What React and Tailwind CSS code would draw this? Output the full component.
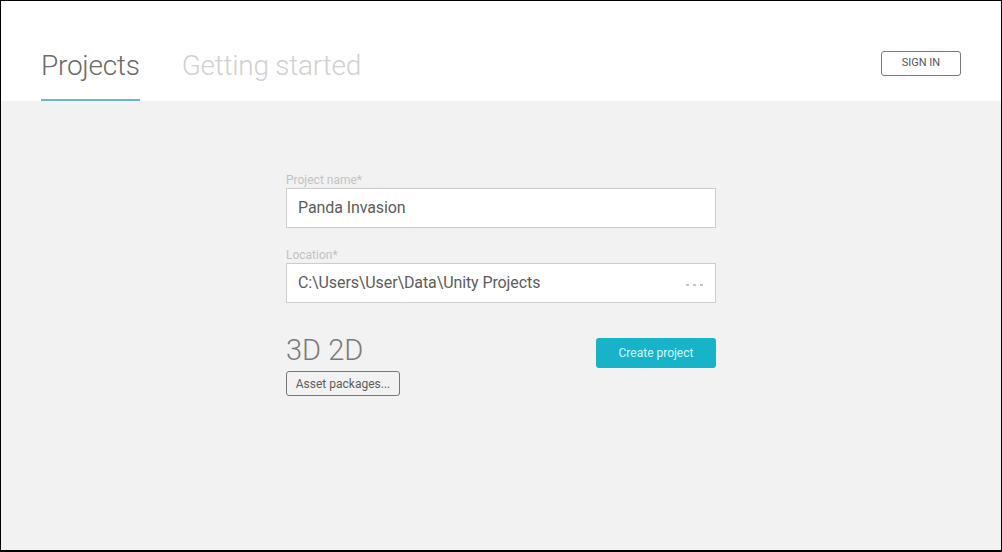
export default function App() {
  return (
    <div
      className="w-[1002px] h-[552px] border-l border-t border-r border-b-2 border-black bg-[#f2f2f2] flex flex-col overflow-hidden"
      style={{ fontFamily: "Roboto, 'Noto Sans', sans-serif" }}
    >
      <header className="h-[100px] bg-white flex justify-between px-[40px] shrink-0">
        <nav className="flex gap-[42px] items-end">
          <div className="flex flex-col">
            <span className="text-[28px] font-light leading-[34px] text-[#6a6a6a] tracking-[-0.25px]">Projects</span>
            <div className="mt-[16px] h-[2px] bg-[#6fb5bf]" />
          </div>
          <div className="flex flex-col">
            <span className="text-[28px] font-light leading-[34px] text-[#d0d0d0] tracking-[-0.25px]">Getting started</span>
            <div className="mt-[16px] h-[2px]" />
          </div>
        </nav>
        <div className="pt-[48px]">
          <button className="w-[80px] h-[25px] border border-[#777] rounded-[3px] text-[11px] text-[#555] bg-white">
            SIGN IN
          </button>
        </div>
      </header>
      <main className="flex-1 pl-[285px] pt-[72px]">
        <div className="w-[430px] flex flex-col">
          <label className="text-[12px] leading-[14px] text-[#c2c2c2]">Project name*</label>
          <div className="mt-[1px] h-[40px] bg-white border border-[#cccccc] flex items-center px-[11px] text-[16px] text-[#5c5c5c] tracking-[-0.1px]">
            Panda Invasion
          </div>
          <label className="mt-[20px] text-[12px] leading-[14px] text-[#c2c2c2]">Location*</label>
          <div className="mt-[1px] h-[40px] bg-white border border-[#cccccc] flex items-center justify-between pl-[11px] pr-[12px] text-[16px] text-[#5c5c5c] tracking-[-0.1px]">
            <span>C:\Users\User\Data\Unity Projects</span>
            <span className="flex gap-[4px] items-center mt-[3px]">
              <span className="w-[3px] h-[2px] bg-[#c4c4c4]" />
              <span className="w-[3px] h-[2px] bg-[#c4c4c4]" />
              <span className="w-[3px] h-[2px] bg-[#c4c4c4]" />
            </span>
          </div>
          <div className="mt-[35px] flex justify-between items-start">
            <div className="flex flex-col items-start">
              <span className="text-[29px] font-light leading-[29px] text-[#7a7a7a] -mt-[2px]">3D 2D</span>
              <button className="mt-[6px] w-[114px] h-[25px] border border-[#777] rounded-[3px] text-[12px] text-[#5c5c5c] bg-transparent">
                Asset packages...
              </button>
            </div>
            <button className="w-[120px] h-[30px] bg-[#17b3c8] rounded-[3px] text-[12px] text-[#d2f8fd]">
              Create project
            </button>
          </div>
        </div>
      </main>
    </div>
  );
}
